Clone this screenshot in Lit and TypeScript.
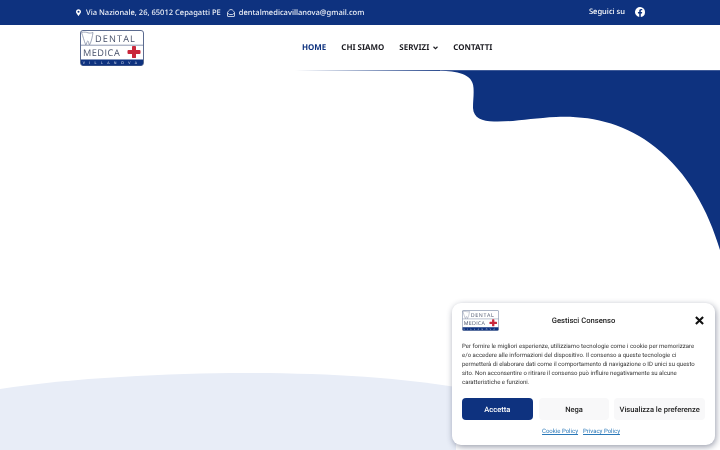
import { LitElement, html, css, svg } from "lit";
import { customElement } from "lit/decorators.js";

const logo = (cls: string) => html`<svg class=${cls} viewBox="0 0 64 36" aria-hidden="true">
  <rect x=".5" y=".5" width="63" height="35" rx="2.5" fill="#fff" stroke="#5b6b8f"/>
  <path d="M1 15.2h62" stroke="#5b6b8f" stroke-width=".7"/>
  <path d="M1.5 2.5c3-.8 5-.2 6.500 .3 1.500 .5 3 .3 5-.3-.6 4-1.500 9-3.500 12.500-1-1-.6-4-1.700-4-1 0-1 3-2 4C4 11 3 6 1.500 2.500z" fill="#fff" stroke="#77839c" stroke-width=".7"/>
  <text class="lt" x="15" y="12.200" font-size="9.200" letter-spacing="1.100" fill="#465069">DENTAL</text>
  <text class="lt" x="3" y="26" font-size="9.200" letter-spacing=".5" fill="#465069">MEDICA</text>
  <path d="M52 16.500a1 1 0 0 1 1-.5h2a1 1 0 0 1 1 .5v3.500h3.500a1 1 0 0 1 1 1v2a1 1 0 0 1-1 1H56v3.500a1 1 0 0 1-1 .5h-2a1 1 0 0 1-1-.5V24h-3.500a1 1 0 0 1-1-1v-2a1 1 0 0 1 1-1H52z" fill="#c9273a"/>
  <path d="M1 29.500h62v4a2 2 0 0 1-2 2H3a2 2 0 0 1-2-2z" fill="#0e327f"/>
  <text class="lt" x="32" y="34" text-anchor="middle" font-size="3.600" letter-spacing="4.400" fill="#dfe6f3">VILLANOVA</text>
</svg>`;

@customElement("app-root")
export class AppRoot extends LitElement {
  static styles = css`
    :host { display: block; width: 720px; height: 450px; position: relative; overflow: hidden; background: #fff; font-family: "Noto Sans", sans-serif; text-rendering: geometricPrecision; filter: blur(.3px); }
    .lt { font-family: "Open Sans", sans-serif; }
    .top { height: 25px; background: #0e327f; color: #fff; display: flex; align-items: center; padding: 0 75px 0 76px; font-size: 7.550px; font-weight: 500; box-sizing: border-box; }
    .top .item { display: flex; align-items: center; gap: 5px; margin-right: 6px; padding-top: 1px; color: #eef1f8; }
    .top .item svg { margin-top: -1px; }
    .top .mail { gap: 4px; }
    .top svg { display: block; }
    .spacer { flex: 1; }
    .follow { display: flex; align-items: center; gap: 10px; margin-top: -1px; }
    .nav { height: 45px; display: flex; align-items: center; padding-left: 80px; box-sizing: border-box; }
    .logo { width: 64px; height: 36px; display: block; }
    .links { display: flex; align-items: center; gap: 15px; margin-left: 158px; font-size: 7.950px; font-weight: 700; color: #1c1c22; }
    .links .active { color: #0e327f; }
    .links .sub { display: flex; align-items: center; gap: 4px; }
    .hero { position: relative; height: 380px; }
    .bg { position: absolute; inset: 0; width: 100%; height: 100%; display: block; }
    .modal { position: absolute; left: 452px; top: 303px; width: 263px; height: 142px; background: #fff; border-radius: 9px; box-shadow: 1px 2px 6px rgba(30, 40, 70, .45); box-sizing: border-box; padding: 7px 10px 0; font-family: Roboto, sans-serif; display: flex; flex-direction: column; }
    .head { display: grid; grid-template-columns: 37px 1fr 37px; align-items: center; height: 21px; }
    .mlogo { width: 37px; height: 21px; display: block; }
    .close { justify-self: end; margin-right: 1px; }
    .title { text-align: center; font-size: 7.650px; font-weight: 500; color: #222; }
    .msg { margin: 11px 0 0; font-size: 6px; line-height: 9px; color: #333; white-space: nowrap; }
    .btns { display: flex; gap: 5px; margin-top: 11px; }
    .btn { height: 22px; width: 71px; border-radius: 4px; background: #f8f8f9; color: #222; font-size: 7.550px; font-weight: 500; display: flex; align-items: center; justify-content: center; white-space: nowrap; }
    .btn.primary { background: #0e327f; color: #fff; margin-right: 1px; }
    .btn.wide { width: 91px; }
    .policy { display: flex; justify-content: center; gap: 5px; margin-top: 8px; padding-right: 5px; font-size: 6px; color: #2a78b8; text-decoration: underline; }
  `;

  render() {
    return html`
      <div class="top">
        <span class="item">
          <svg width="5" height="7" viewBox="0 0 384 512"><path fill="#fff" d="M172 502C27 291 0 269 0 192 0 86 86 0 192 0s192 86 192 192c0 77-27 99-172 310a24 24 0 0 1-40 0zm20-230a80 80 0 1 0 0-160 80 80 0 0 0 0 160z"/></svg>
          Via Nazionale, 26, 65012 Cepagatti PE
        </span>
        <span class="item mail">
          <svg width="8" height="8" viewBox="0 0 16 16" fill="none" stroke="#fff" stroke-width="1.500"><path d="M1 7c1-1 3-6 7-6s6 5 7 6v7a1 1 0 0 1-1 1H2a1 1 0 0 1-1-1z"/><path d="M1 8l4 3h6l4-3"/></svg>
          dentalmedicavillanova@gmail.com
        </span>
        <span class="spacer"></span>
        <span class="follow">
          Seguici su
          <svg width="10" height="10" viewBox="0 0 16 16"><path fill="#fff" d="M16 8.050A8 8 0 1 0 6.750 16v-5.600H4.720V8.050h2.030V6.300c0-2 1.200-3.120 3.020-3.120.880 0 1.800.160 1.800.160v1.970h-1c-1 0-1.310.620-1.310 1.250v1.490h2.220l-.350 2.350H9.260V16A8 8 0 0 0 16 8.050z"/></svg>
        </span>
      </div>
      <div class="nav">
        ${logo("logo")}
        <div class="links">
          <span class="active">HOME</span>
          <span>CHI SIAMO</span>
          <span class="sub">SERVIZI
            <svg width="5" height="4" viewBox="0 0 10 8" fill="none" stroke="#1c1c22" stroke-width="2.200"><path d="M1 1.500l4 4 4-4"/></svg>
          </span>
          <span>CONTATTI</span>
        </div>
      </div>
      <div class="hero">
        <svg class="bg" viewBox="0 70 720 380" preserveAspectRatio="none" aria-hidden="true">
          <defs>
            <linearGradient id="fade" x1="0" x2="1" y1="0" y2="0">
              <stop offset="0" stop-color="#0e327f" stop-opacity="0"/>
              <stop offset="1" stop-color="#0e327f" stop-opacity=".9"/>
            </linearGradient>
          </defs>
          ${svg`<rect x="295" y="70" width="150" height="1" fill="url(#fade)"/>
          <rect x="440" y="70" width="280" height="1" fill="#6f83b3"/>
          <path fill="#0e327f" d="M440 70.500C456 71.500 473 73 473.500 88 C474 95 473 101 473 108 C473.500 118 482 121.500 494 121.500 C515 122 533 118 556 117 C590 115.500 625 123 655 147 C688 173 708 210 720 250 V70.500Z"/>
          <path fill="#e8edf7" d="M0 389C70 378 170 373 245 373C330 373 400 378 456 387V450H0Z"/>`}
        </svg>
      </div>
      <div class="modal">
        <div class="head">
          ${logo("mlogo")}
          <div class="title">Gestisci Consenso</div>
          <svg class="close" width="9" height="9" viewBox="0 0 10 10" stroke="#111" stroke-width="2.300"><path d="M1 1l8 8M9 1l-8 8"/></svg>
        </div>
        <p class="msg">Per fornire le migliori esperienze, utilizziamo tecnologie come i cookie per memorizzare<br>e/o accedere alle informazioni del dispositivo. Il consenso a queste tecnologie ci<br>permetterà di elaborare dati come il comportamento di navigazione o ID unici su questo<br>sito. Non acconsentire o ritirare il consenso può influire negativamente su alcune<br>caratteristiche e funzioni.</p>
        <div class="btns">
          <div class="btn primary">Accetta</div>
          <div class="btn">Nega</div>
          <div class="btn wide">Visualizza le preferenze</div>
        </div>
        <div class="policy"><span>Cookie Policy</span><span>Privacy Policy</span></div>
      </div>
    `;
  }
}
